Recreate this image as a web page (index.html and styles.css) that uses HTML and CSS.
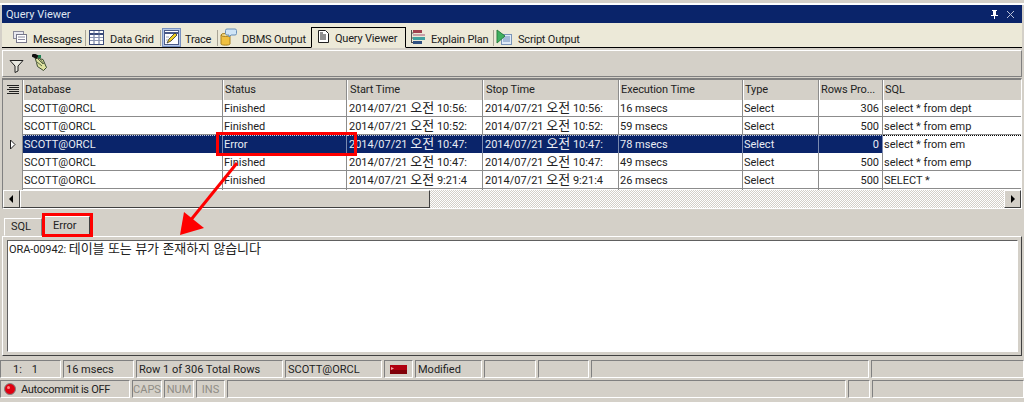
FILE: index.html
```html
<!DOCTYPE html>
<html lang="ko">
<head>
<meta charset="utf-8">
<title>Query Viewer</title>
<link rel="stylesheet" href="styles.css">
</head>
<body>
<div class="window">
  <div class="topstrip"></div>
  <header class="titlebar">
    <span>Query Viewer</span>
    <span class="title-btns">
      <svg width="9" height="11" viewBox="0 0 9 11"><path d="M2 1h5v1H6v4h2v1H5v3H4V7H1V6h2V2H2z" fill="#fff"/></svg>
      <svg width="9" height="9" viewBox="0 0 9 9"><path d="M1 1l7 7M8 1L1 8" stroke="#b8c0d8" fill="none"/></svg>
    </span>
  </header>
  <nav class="tabs">
    <div class="tab t-messages">
      <svg width="16" height="16" viewBox="0 0 16 16"><rect x="1.500" y="2.500" width="10" height="7" fill="#e8e8f0" stroke="#8a8a9a"/><rect x="4.500" y="5.500" width="10" height="8" fill="#fff" stroke="#77778a"/><path d="M6 8h7M6 10.500h7" stroke="#8a8aa0"/></svg>
      <span>Messages</span>
    </div>
    <i class="sep"></i>
    <div class="tab t-grid">
      <svg width="17" height="17" viewBox="0 0 17 17"><rect x="1.500" y="1.500" width="14" height="14" fill="#fff" stroke="#3a4a78"/><path d="M2 5h13" stroke="#3a4a78" stroke-width="2"/><path d="M6 2v13M11 2v13" stroke="#5a6a90"/><path d="M2 8.500h13M2 11.500h13" stroke="#8a94b0"/></svg>
      <span>Data Grid</span>
    </div>
    <i class="sep"></i>
    <div class="tab t-trace">
      <svg class="hot" width="17" height="17" viewBox="0 0 17 17"><rect x="1.500" y="1.500" width="14" height="14" fill="#fff" stroke="#4a5a88"/><path d="M2 4h13" stroke="#4a5a88" stroke-width="2"/><path d="M4 14l2-4 6-6 2 2-6 6z" fill="#f0d020" stroke="#303030" stroke-width=".8"/><path d="M3 8h3M3 11h2" stroke="#a0a8c0"/></svg>
      <span>Trace</span>
    </div>
    <i class="sep"></i>
    <div class="tab t-dbms">
      <svg width="17" height="18" viewBox="0 0 17 18"><path d="M1 7c0-1.500 9-1.500 9 0v9c0 1.500-9 1.500-9 0z" fill="#f0c040" stroke="#a88020"/><ellipse cx="5.500" cy="7" rx="4.500" ry="1.500" fill="#f8e090" stroke="#a88020"/><path d="M7 1h8a1.500 1.500 0 0 1 1.500 1.500v3A1.500 1.500 0 0 1 15 7H11l-2 2V7H7A1.500 1.500 0 0 1 5.500 5.500v-3A1.500 1.500 0 0 1 7 1z" fill="#cfe4f6" stroke="#6a90b8"/></svg>
      <span>DBMS Output</span>
    </div>
    <div class="tab-active">
      <svg width="13" height="15" viewBox="0 0 13 15"><path d="M1.500 1.500h7l3 3v9h-10z" fill="#fff" stroke="#202020"/><path d="M3 6h6M3 8h6M3 10h6M3 4h3" stroke="#202020"/></svg>
      <span>Query Viewer</span>
    </div>
    <div class="tab t-explain">
      <svg width="17" height="16" viewBox="0 0 17 16"><path d="M2.500 1v13M2.500 4h2M2.500 9h2M2.500 13.500h2" stroke="#505050" fill="none"/><rect x="4" y="1" width="9" height="3" fill="#a04050"/><rect x="4" y="5" width="12" height="2" fill="#c8a0a8"/><rect x="4" y="8" width="12" height="3" fill="#40a0a0"/><rect x="4" y="12" width="9" height="3" fill="#305080"/></svg>
      <span>Explain Plan</span>
    </div>
    <i class="sep"></i>
    <div class="tab t-script">
      <svg width="17" height="17" viewBox="0 0 17 17"><rect x="5.500" y="5.500" width="10" height="10" fill="#dfeaf8" stroke="#7a94b8"/><path d="M7 8h7M7 10h7M7 12h7" stroke="#6a8ab8"/><path d="M1 1l8 6-8 7z" fill="#40b060" stroke="#2a8040"/></svg>
      <span>Script Output</span>
    </div>
  </nav>
  <div class="toolbar">
    <svg class="filter" width="15" height="14" viewBox="0 0 15 14"><path d="M1 1.500h13L9 7v5l-3 1.500V7z" fill="#e8e8e0" stroke="#202020"/></svg>
    <svg class="hand" width="16" height="17" viewBox="0 0 16 17"><path d="M3 3.500l8 2 3.500 8-3 3-6-4-1-4z" fill="#dfe3a0" stroke="#3a4a30"/><path d="M6 5l5 5M5 8l5 4M8 5l4 5" stroke="#3a4a30" fill="none" stroke-width=".8"/><rect x="0" y="0" width="6" height="4" transform="rotate(25 3 2)" fill="#101010"/><rect x="6" y="1" width="3" height="3" fill="#1c8050"/></svg>
  </div>
  <section class="grid">
    <div class="row head">
      <div class="ind"><svg width="14" height="10" viewBox="0 0 14 10"><path d="M1 .5h12M3 2.500h10M1 4.500h12M3 6.500h10M1 8.500h12" stroke="#202020"/></svg></div>
      <div class="c">Database</div><div class="c">Status</div><div class="c">Start Time</div><div class="c">Stop Time</div><div class="c">Execution Time</div><div class="c">Type</div><div class="c">Rows Pro...</div><div class="c">SQL</div>
    </div>
    <div class="row">
      <div class="ind"></div>
      <div class="c">SCOTT@ORCL</div><div class="c">Finished</div><div class="c">2014/07/21 <span class="ko">오전</span> 10:56:</div><div class="c">2014/07/21 <span class="ko">오전</span> 10:56:</div><div class="c">16 msecs</div><div class="c">Select</div><div class="c num">306</div><div class="c">select * from dept</div>
    </div>
    <div class="row">
      <div class="ind"></div>
      <div class="c">SCOTT@ORCL</div><div class="c">Finished</div><div class="c">2014/07/21 <span class="ko">오전</span> 10:52:</div><div class="c">2014/07/21 <span class="ko">오전</span> 10:52:</div><div class="c">59 msecs</div><div class="c">Select</div><div class="c num">500</div><div class="c">select * from emp</div>
    </div>
    <div class="row sel">
      <div class="ind"><svg width="7" height="11" viewBox="0 0 7 11"><path d="M1.500 1v9L6 5.500z" fill="#fff" stroke="#202020"/></svg></div>
      <div class="c">SCOTT@ORCL</div><div class="c">Error</div><div class="c">2014/07/21 <span class="ko">오전</span> 10:47:</div><div class="c">2014/07/21 <span class="ko">오전</span> 10:47:</div><div class="c">78 msecs</div><div class="c">Select</div><div class="c num">0</div><div class="c cur">select * from em</div>
    </div>
    <div class="row">
      <div class="ind"></div>
      <div class="c">SCOTT@ORCL</div><div class="c">Finished</div><div class="c">2014/07/21 <span class="ko">오전</span> 10:47:</div><div class="c">2014/07/21 <span class="ko">오전</span> 10:47:</div><div class="c">49 msecs</div><div class="c">Select</div><div class="c num">500</div><div class="c">select * from emp</div>
    </div>
    <div class="row">
      <div class="ind"></div>
      <div class="c">SCOTT@ORCL</div><div class="c">Finished</div><div class="c">2014/07/21 <span class="ko">오전</span> 9:21:4</div><div class="c">2014/07/21 <span class="ko">오전</span> 9:21:4</div><div class="c">26 msecs</div><div class="c">Select</div><div class="c num">500</div><div class="c">SELECT *</div>
    </div>
    <div class="hscroll">
      <div class="sb-btn"><svg width="5" height="8" viewBox="0 0 5 8"><path d="M4 0v8L0 4z" fill="#000"/></svg></div>
      <div class="sb-thumb"></div>
      <div class="sb-track"></div>
      <div class="sb-btn"><svg width="5" height="8" viewBox="0 0 5 8"><path d="M1 0v8l4-4z" fill="#000"/></svg></div>
    </div>
  </section>
  <div class="subtabs">
    <div class="st">SQL</div>
    <div class="st st-on">Error</div>
  </div>
  <div class="panel">
    <div class="memo">ORA-00942: <span class="ko">테이블 또는 뷰가 존재하지 않습니다</span></div>
  </div>
  <footer class="status">
    <div class="sline s1">
      <div class="p pos"><span>1:</span><span>1</span></div>
      <div class="p">16 msecs</div>
      <div class="p">Row 1 of 306 Total Rows</div>
      <div class="p">SCOTT@ORCL</div>
      <div class="p flagp"><svg width="17" height="9" viewBox="0 0 17 9"><rect width="17" height="9" fill="#b00010"/><rect y="5" width="17" height="4" fill="#800008"/><path d="M1 2l3 1.500L1 5z" fill="#f0a0a0"/></svg></div>
      <div class="p">Modified</div>
      <div class="p"></div><div class="p"></div><div class="p"></div><div class="p"></div>
    </div>
    <div class="sline s2">
      <div class="p auto"><svg width="12" height="12" viewBox="0 0 12 12"><circle cx="6" cy="6" r="5.500" fill="#e00010" stroke="#808080"/><circle cx="4.500" cy="4.500" r="1.500" fill="#ff8080"/></svg><span>Autocommit is OFF</span></div>
      <div class="p off">CAPS</div>
      <div class="p off">NUM</div>
      <div class="p off">INS</div>
      <div class="p"></div><div class="p"></div><div class="p"></div>
    </div>
  </footer>
  <div class="mark mark-error"></div>
  <div class="mark mark-tab"></div>
  <svg class="arrow" width="70" height="80" viewBox="0 0 70 80"><path d="M59 3L12 61" stroke="#f00" stroke-width="3" fill="none"/><path d="M2 75L6 52 26 68z" fill="#f00"/></svg>
</div>
</body>
</html>
```
FILE: styles.css
```css
* { box-sizing: border-box; }
html, body { margin: 0; padding: 0; }
body { background: #d4d0c8; font: 11px Roboto, "Noto Sans CJK KR", sans-serif; color: #222; overflow: hidden; }
svg { display: block; flex: none; }
.window { position: relative; width: 1024px; height: 402px; overflow: hidden; display: flex; flex-direction: column; }
.ko { font-family: "Noto Sans CJK KR", sans-serif; font-size: 13px; line-height: 1; }

.topstrip { height: 5px; background: #d4d0c8; border-bottom: 2px solid #fff; }
.titlebar { height: 18px; margin: 0 2px; padding: 0 4px; background: #0a246a; color: #dfe4f0; display: flex; align-items: center; justify-content: space-between; }
.title-btns { display: flex; align-items: center; gap: 7px; margin-right: 3px; }

.tabs { height: 25px; margin: 0 2px; padding: 4px 0 0 10px; background: #ece9d8; border-bottom: 1px solid #000; display: flex; align-items: stretch; letter-spacing: -.2px; }
.tab { display: flex; align-items: center; gap: 5px; white-space: nowrap; color: #222; flex: none; }
.tab span, .tab-active span { padding-top: 4px; }
.sep { width: 1px; height: 16px; margin: 3px 2px 0 0; background: #a8a496; flex: none; }
.hot { background: #b5c8e8; outline: 1px solid #7890c0; }
.t-messages { width: 73px; }
.t-grid { width: 72px; }
.t-trace { width: 54px; }
.t-dbms { width: 91px; }
.t-explain { width: 87px; padding-left: 3px; }
.tab-active { width: 95px; flex: none; white-space: nowrap; margin-bottom: -1px; display: flex; align-items: center; gap: 5px; padding: 0 0 2px 5px; background: #ece9d8; border: 1px solid #000; border-bottom-color: #ece9d8; }

.toolbar { height: 27px; margin: 2px 2px 0; padding: 0 0 0 6px; background: #d4d0c8; border: 1px solid; border-color: #fff #808080 #808080 #fff; display: flex; align-items: center; gap: 8px; }
.filter { margin-top: 4px; }
.hand { margin-top: -3px; }

.grid { margin: 1px 2px 0; height: 131px; border: 1px solid; border-color: #808080 #fff #fff #808080; border-top: 2px solid #808080; background: #fff; flex: none; }
.row { display: grid; grid-template-columns: 20px 200px 124px 136px 136px 124px 76px 64px 1fr; height: 18px; border-bottom: 1px solid #8c8c8c; }
.row > div { border-right: 1px solid #8c8c8c; padding: 0 1px; white-space: nowrap; line-height: 19px; }
.row > div:nth-child(4), .row > div:nth-child(5) { padding-left: 2px; }
.ind { background: #d4d0c8; display: flex; align-items: center; justify-content: center; }
.head { background: #d4d0c8; height: 19px; letter-spacing: -.1px; }
.head > div { line-height: 20px !important; }
.head .c { background: #d4d0c8; color: #222; border-left: 1px solid #fff; }
.c:last-child { border-right: 0 !important; }
.num { text-align: right; padding-right: 3px !important; }
.sel { border-bottom: 1px dotted #000; }
.sel .c { background: #0a246a; color: #e8ecf4; border-right-color: #7a8ab0; border-top: 1px dotted #c8d0e0; line-height: 17px !important; }
.sel .c.cur { background: #fff; color: #222; border-top-color: #000; }

.hscroll { height: 18px; margin-top: 1px; display: flex; background: repeating-conic-gradient(#fff 0 25%, #d4d0c8 0 50%) 0 0 / 2px 2px; }
.sb-btn { width: 17px; flex: none; background: #d4d0c8; border: 1px solid; border-color: #fff #404040 #404040 #fff; display: flex; align-items: center; justify-content: center; }
.sb-thumb { width: 410px; flex: none; background: #d4d0c8; border: 1px solid; border-color: #fff #404040 #404040 #fff; }
.sb-track { flex: 1; }

.subtabs { height: 27px; padding: 0 0 0 4px; display: flex; align-items: flex-end; flex: none; }
.st { height: 18px; padding: 1px 6px 0; border: 1px solid; border-color: #fff #808080 transparent #fff; flex: none; width: 38px; }
.st-on { width: 48px; height: 20px; padding: 2px 0 0 10px; border-right-color: #404040; }

.panel { height: 120px; flex: none; margin: 0 2px; padding: 3px 3px 3px 4px; border: 1px solid; border-color: #fff #404040 #404040 #fff; }
.memo { height: 100%; padding: 0 1px; background: #fff; border: 1px solid; border-color: #606060 #fff #fff #606060; color: #222; line-height: 15px; letter-spacing: -.1px; box-shadow: 0 0 0 1px #d4d0c8; }

.status { padding-top: 4px; display: flex; flex-direction: column; gap: 2px; flex: none; }
.sline { display: grid; gap: 2px; height: 18px; }
.s1 { grid-template-columns: 61px 71px 147px 97px 29px 67px 52px 51px 278px 1fr; }
.s2 { grid-template-columns: 130px 30px 30px 29px 619px 22px 1fr; }
.p { border: 1px solid; border-color: #808080 #fff #fff #808080; padding: 0 2px; line-height: 17px; white-space: nowrap; overflow: hidden; color: #222; }
.pos { display: flex; gap: 10px; padding-left: 12px; }
.flagp { display: flex; align-items: center; justify-content: center; }
.auto { display: flex; align-items: center; gap: 5px; padding-left: 3px; letter-spacing: -.3px; }
.off { color: #8f8c85; text-align: center; padding: 0; }

.mark { position: absolute; border: 3px solid #f00; pointer-events: none; }
.mark-error { left: 216px; top: 132px; width: 141px; height: 24px; }
.mark-tab { left: 42px; top: 213px; width: 51px; height: 24px; }
.arrow { position: absolute; left: 178px; top: 160px; }
```
